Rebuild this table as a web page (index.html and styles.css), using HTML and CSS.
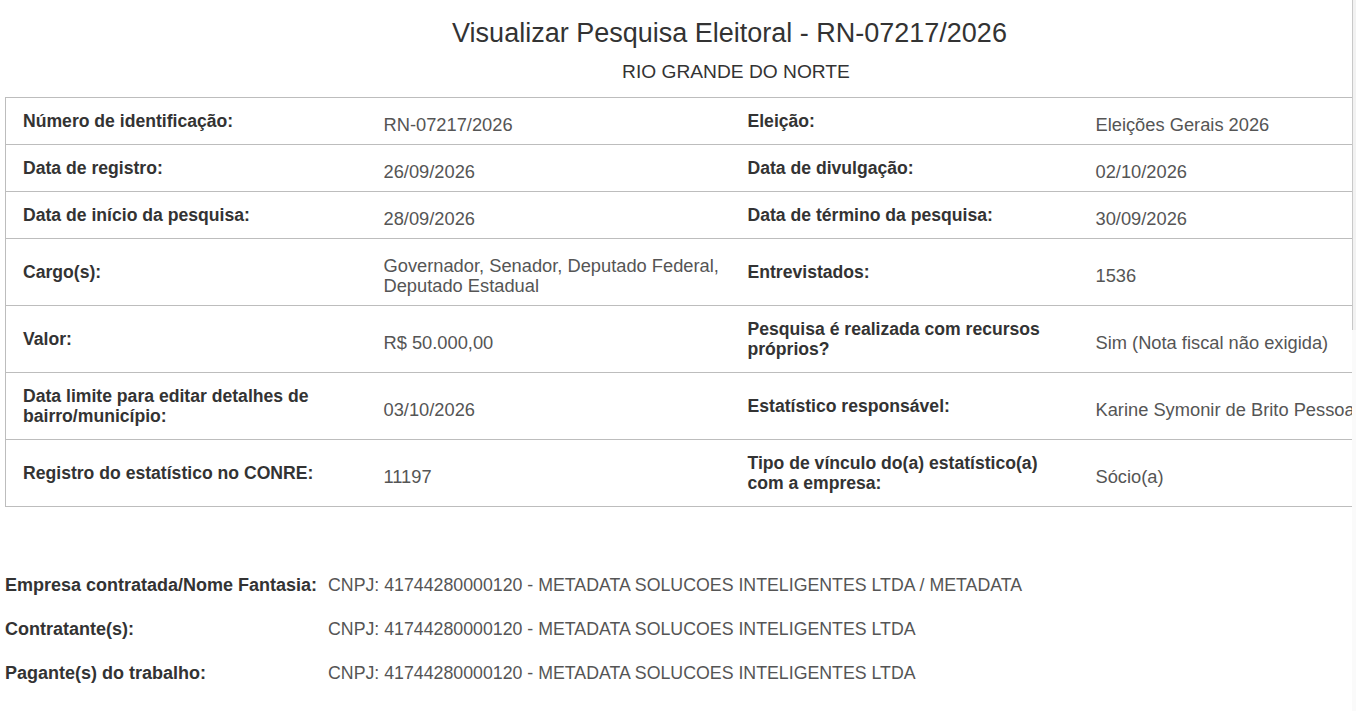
FILE: index.html
```html
<!DOCTYPE html>
<html lang="pt-BR">
<head>
<meta charset="utf-8">
<title>Visualizar Pesquisa Eleitoral - RN-07217/2026</title>
<link rel="stylesheet" href="styles.css">
</head>
<body>
<div class="viewport">
  <div class="page">
    <h1 class="title">Visualizar Pesquisa Eleitoral - RN-07217/2026</h1>
    <div class="subtitle">RIO GRANDE DO NORTE</div>

    <table class="details">
      <colgroup>
        <col class="c1"><col class="c2"><col class="c3"><col class="c4">
      </colgroup>
      <tbody>
        <tr>
          <td class="lbl">Número de identificação:</td>
          <td class="val">RN-07217/2026</td>
          <td class="lbl">Eleição:</td>
          <td class="val">Eleições Gerais 2026</td>
        </tr>
        <tr>
          <td class="lbl">Data de registro:</td>
          <td class="val">26/09/2026</td>
          <td class="lbl">Data de divulgação:</td>
          <td class="val">02/10/2026</td>
        </tr>
        <tr>
          <td class="lbl">Data de início da pesquisa:</td>
          <td class="val">28/09/2026</td>
          <td class="lbl">Data de término da pesquisa:</td>
          <td class="val">30/09/2026</td>
        </tr>
        <tr>
          <td class="lbl">Cargo(s):</td>
          <td class="val">Governador, Senador, Deputado Federal, Deputado Estadual</td>
          <td class="lbl">Entrevistados:</td>
          <td class="val">1536</td>
        </tr>
        <tr>
          <td class="lbl">Valor:</td>
          <td class="val">R$ 50.000,00</td>
          <td class="lbl">Pesquisa é realizada com recursos próprios?</td>
          <td class="val">Sim (Nota fiscal não exigida)</td>
        </tr>
        <tr>
          <td class="lbl">Data limite para editar detalhes de bairro/município:</td>
          <td class="val">03/10/2026</td>
          <td class="lbl">Estatístico responsável:</td>
          <td class="val">Karine Symonir de Brito Pessoa</td>
        </tr>
        <tr>
          <td class="lbl">Registro do estatístico no CONRE:</td>
          <td class="val">11197</td>
          <td class="lbl">Tipo de vínculo do(a) estatístico(a) com a empresa:</td>
          <td class="val">Sócio(a)</td>
        </tr>
      </tbody>
    </table>

    <div class="parties">
      <div class="p-lbl">Empresa contratada/Nome Fantasia:</div>
      <div class="p-val">CNPJ: 41744280000120 - METADATA SOLUCOES INTELIGENTES LTDA / METADATA</div>
      <div class="p-lbl">Contratante(s):</div>
      <div class="p-val">CNPJ: 41744280000120 - METADATA SOLUCOES INTELIGENTES LTDA</div>
      <div class="p-lbl">Pagante(s) do trabalho:</div>
      <div class="p-val">CNPJ: 41744280000120 - METADATA SOLUCOES INTELIGENTES LTDA</div>
    </div>
  </div>
</div>
<div class="scrollbar"><div class="thumb"></div></div>
</body>
</html>
```

FILE: styles.css
```css
html, body {
  margin: 0;
  padding: 0;
  background: #ffffff;
}

body {
  font-family: "Liberation Sans", Arial, sans-serif;
  color: #555555;
  overflow: hidden;
}

.viewport {
  width: 1352px;
  height: 711px;
  overflow: hidden;
}

.page {
  width: 1456px;
  padding-left: 5px;
}

.title {
  margin: 0;
  padding-top: 18px;
  padding-right: 7px;
  font-size: 27px;
  line-height: 30px;
  font-weight: normal;
  color: #333333;
  text-align: center;
}

.subtitle {
  margin-top: 13px;
  padding-left: 6px;
  font-size: 19.2px;
  line-height: 22px;
  color: #333333;
  text-align: center;
}

.details {
  margin-top: 14px;
  width: 1456px;
  table-layout: fixed;
  border-collapse: collapse;
  border: 1px solid #bdbdbd;
  line-height: 20px;
}

.c1 { width: 361px; }
.c2 { width: 364px; }
.c3 { width: 348px; }
.c4 { width: 383px; }

.details tr {
  border-top: 1px solid #bdbdbd;
}

.details td {
  vertical-align: middle;
  padding: 13px 8px 13px 17px;
}

.details .lbl {
  font-size: 17.6px;
  font-weight: bold;
  color: #333333;
}

.details .val {
  font-size: 18.3px;
  color: #555555;
  padding-top: 17px;
  padding-bottom: 9px;
  padding-right: 3px;
}

.parties {
  margin-top: 68px;
  display: grid;
  grid-template-columns: 323px auto;
  row-gap: 24px;
  line-height: 20px;
}

.p-lbl {
  font-weight: bold;
  color: #333333;
  font-size: 18px;
}

.p-val {
  color: #555555;
  font-size: 17.75px;
}

.scrollbar {
  position: absolute;
  top: 0;
  right: 0;
  width: 4px;
  height: 711px;
  background: #fafafa;
}

.thumb {
  height: 330px;
  border-left: 1px solid #c9c9c9;
  background: #f2f2f2;
}
```
